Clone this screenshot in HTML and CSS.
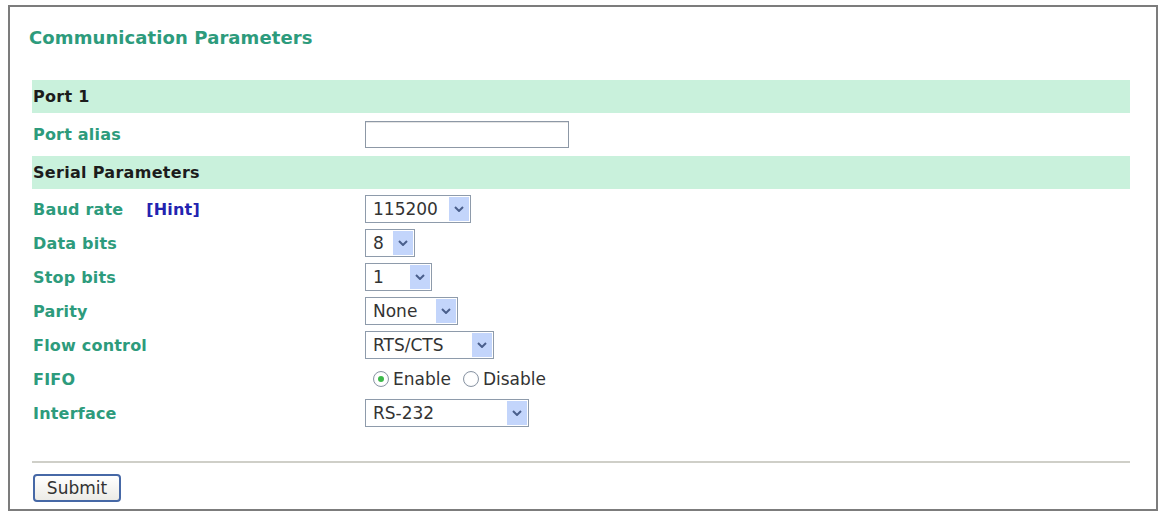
FILE: index.html
```html
<!DOCTYPE html>
<html lang="en">
<head>
<meta charset="utf-8">
<title>Communication Parameters</title>
<link rel="stylesheet" href="styles.css">
</head>
<body>
<div class="frame">
  <h1 class="title">Communication Parameters</h1>
  <form class="form">
    <div class="band">Port 1</div>
    <div class="row row-tall">
      <label class="label">Port alias</label>
      <div class="field"><span class="textbox"></span></div>
    </div>
    <div class="band">Serial Parameters</div>
    <div class="rows">
      <div class="row">
        <label class="label">Baud rate <span class="hint">[Hint]</span></label>
        <div class="field">
          <span class="select w-baud"><span class="value">115200</span><span class="arrow"><svg viewBox="0 0 10 6" width="10" height="6"><path d="M1 1 L5 5 L9 1" fill="none" stroke="#4a5f8c" stroke-width="2"/></svg></span></span>
        </div>
      </div>
      <div class="row">
        <label class="label">Data bits</label>
        <div class="field">
          <span class="select w-data"><span class="value">8</span><span class="arrow"><svg viewBox="0 0 10 6" width="10" height="6"><path d="M1 1 L5 5 L9 1" fill="none" stroke="#4a5f8c" stroke-width="2"/></svg></span></span>
        </div>
      </div>
      <div class="row">
        <label class="label">Stop bits</label>
        <div class="field">
          <span class="select w-stop"><span class="value">1</span><span class="arrow"><svg viewBox="0 0 10 6" width="10" height="6"><path d="M1 1 L5 5 L9 1" fill="none" stroke="#4a5f8c" stroke-width="2"/></svg></span></span>
        </div>
      </div>
      <div class="row">
        <label class="label">Parity</label>
        <div class="field">
          <span class="select w-parity"><span class="value">None</span><span class="arrow"><svg viewBox="0 0 10 6" width="10" height="6"><path d="M1 1 L5 5 L9 1" fill="none" stroke="#4a5f8c" stroke-width="2"/></svg></span></span>
        </div>
      </div>
      <div class="row">
        <label class="label">Flow control</label>
        <div class="field">
          <span class="select w-flow"><span class="value">RTS/CTS</span><span class="arrow"><svg viewBox="0 0 10 6" width="10" height="6"><path d="M1 1 L5 5 L9 1" fill="none" stroke="#4a5f8c" stroke-width="2"/></svg></span></span>
        </div>
      </div>
      <div class="row">
        <label class="label">FIFO</label>
        <div class="field radios">
          <span class="radio"><span class="dot on"></span>Enable</span>
          <span class="radio"><span class="dot"></span>Disable</span>
        </div>
      </div>
      <div class="row">
        <label class="label">Interface</label>
        <div class="field">
          <span class="select w-iface"><span class="value">RS-232</span><span class="arrow"><svg viewBox="0 0 10 6" width="10" height="6"><path d="M1 1 L5 5 L9 1" fill="none" stroke="#4a5f8c" stroke-width="2"/></svg></span></span>
        </div>
      </div>
    </div>
    <div class="rule"></div>
    <div class="actions"><span class="button">Submit</span></div>
  </form>
</div>
</body>
</html>
```

FILE: styles.css
```css
html, body {
  margin: 0;
  padding: 0;
  background: #ffffff;
}

body {
  font-family: "DejaVu Sans", Verdana, sans-serif;
  color: #333333;
}

.frame {
  box-sizing: border-box;
  width: 1150px;
  height: 506px;
  margin: 5px 0 0 8px;
  border: 2px solid #7c7c7c;
  padding: 21px 26px 0 22px;
}

.title {
  margin: 0 0 32px -3px;
  font-size: 18px;
  line-height: 20px;
  font-weight: bold;
  letter-spacing: 0.1px;
  color: #2d9b7c;
}

.form {
  display: flex;
  flex-direction: column;
}

.band {
  height: 33px;
  line-height: 33px;
  padding-left: 1px;
  background: #c9f1dc;
  font-size: 16px;
  font-weight: bold;
  letter-spacing: 0.3px;
  color: #1c1c1c;
}

.rows {
  padding-top: 3px;
}

.row {
  display: flex;
  align-items: center;
  height: 34px;
}

.row-tall {
  height: 43px;
}

.label {
  width: 332px;
  padding-left: 1px;
  font-size: 16px;
  font-weight: bold;
  letter-spacing: 0.2px;
  color: #2d9b7c;
}

.hint {
  margin-left: 17px;
  color: #2323b0;
}

.field {
  display: flex;
  align-items: center;
}

.textbox {
  box-sizing: border-box;
  width: 204px;
  height: 27px;
  border: 1px solid #8d98a6;
  box-shadow: inset 0 1px 0 #e4e4e4;
  background: #ffffff;
}

.select {
  box-sizing: border-box;
  display: flex;
  align-items: stretch;
  height: 28px;
  border: 1px solid #8e9bab;
  background: #ffffff;
}

.value {
  flex: 1;
  padding-left: 7px;
  font-size: 17px;
  line-height: 26px;
  color: #333333;
}

.arrow {
  width: 20px;
  margin: 1px 1px 1px 0;
  display: flex;
  align-items: center;
  justify-content: center;
  background: #c3d5fb;
}

.w-baud { width: 106px; }
.w-data { width: 50px; }
.w-stop { width: 67px; }
.w-parity { width: 93px; }
.w-flow { width: 129px; }
.w-iface { width: 164px; }

.radios {
  padding-left: 8px;
  gap: 12px;
}

.radio {
  display: flex;
  align-items: center;
  font-size: 17px;
  line-height: 20px;
  color: #333333;
}

.dot {
  box-sizing: border-box;
  width: 16px;
  height: 16px;
  margin-right: 4px;
  border: 1px solid #8a95a4;
  border-radius: 50%;
  background: radial-gradient(circle, #ffffff 55%, #e2e6ea 100%);
  position: relative;
}

.dot.on::after {
  content: "";
  position: absolute;
  left: 4px;
  top: 4px;
  width: 6px;
  height: 6px;
  border-radius: 50%;
  background: #3cb94a;
}

.rule {
  margin-top: 31px;
  height: 2px;
  background: #cfcfc8;
}

.actions {
  padding-top: 11px;
}

.button {
  box-sizing: border-box;
  display: inline-block;
  width: 88px;
  height: 28px;
  margin-left: 1px;
  border: 2px solid #4668a6;
  border-radius: 4px;
  background: linear-gradient(#ffffff, #ecebe6);
  font-size: 17px;
  line-height: 24px;
  text-align: center;
  color: #333333;
}
```
